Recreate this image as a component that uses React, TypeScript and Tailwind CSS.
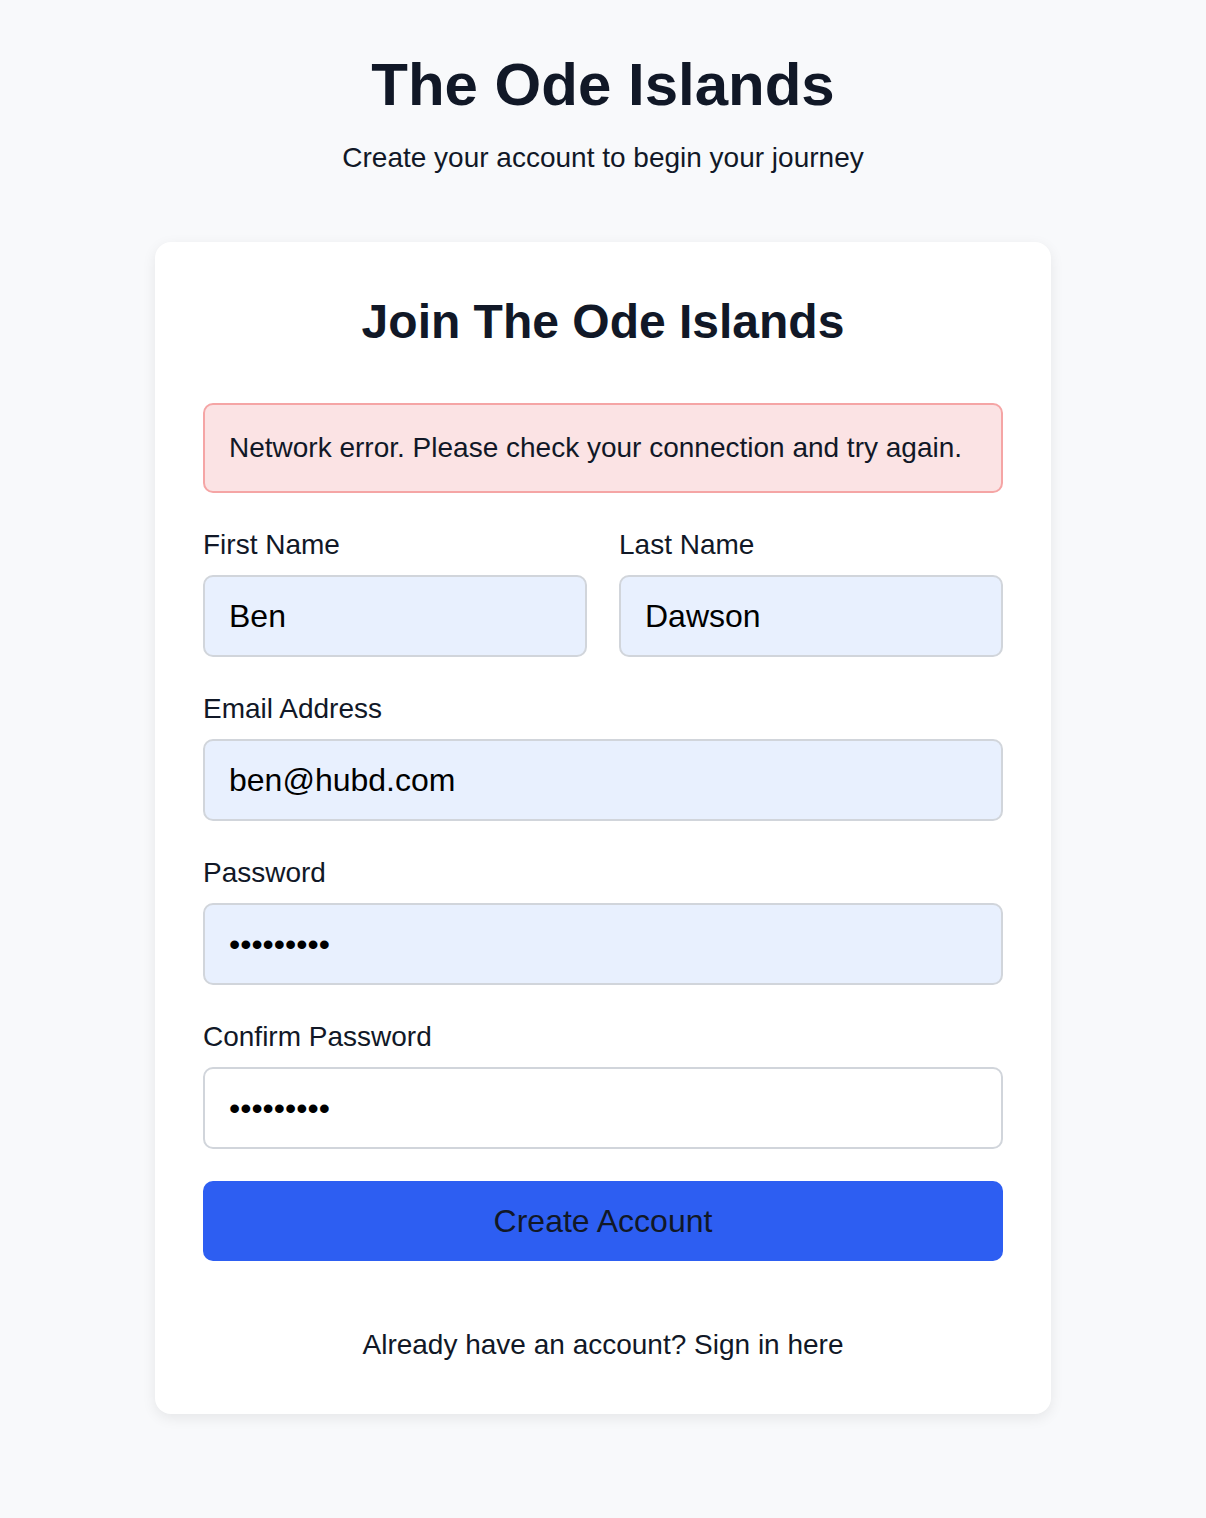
import React from "react";

const font = { fontFamily: '"Liberation Sans", Arial, sans-serif' };

function Field({
  label,
  value,
  type = "text",
  filled = true,
}: {
  label: string;
  value: string;
  type?: string;
  filled?: boolean;
}) {
  return (
    <div className="flex flex-col">
      <label className="text-[28px] leading-[40px] text-[#111827] mb-[10px]">{label}</label>
      <input
        type={type}
        defaultValue={value}
        className={`h-[82px] w-full rounded-[10px] border-2 border-[#d1d5db] px-[24px] text-[32px] text-black outline-none ${
          filled ? "bg-[#e8f0fe]" : "bg-white"
        }`}
        style={font}
      />
    </div>
  );
}

export default function App() {
  return (
    <div className="min-h-[1518px] bg-[#f8f9fb] pt-[49px] text-[#111827]" style={font}>
      <h1 className="text-center text-[60px] leading-[72px] font-bold text-[#111827]">The Ode Islands</h1>
      <p className="mt-[16px] text-center text-[28px] leading-[42px] text-[#111827]">
        Create your account to begin your journey
      </p>
      <div className="mx-auto mt-[63px] w-[896px] rounded-[16px] bg-white px-[48px] pt-[48px] pb-[49px] shadow-[0_4px_14px_rgba(0,0,0,0.08)]">
        <h2 className="pt-[3px] text-center text-[48px] leading-[58px] font-bold text-[#111827] mb-[52px]">
          Join The Ode Islands
        </h2>
        <div className="rounded-[10px] border-2 border-[#f5a5a5] bg-[#fbe3e4] px-[24px] py-[24px] text-[28px] leading-[38px] text-[#111827]">
          Network error. Please check your connection and try again.
        </div>
        <div className="mt-[32px] flex flex-col gap-[32px]">
          <div className="grid grid-cols-2 gap-[32px]">
            <Field label="First Name" value="Ben" />
            <Field label="Last Name" value="Dawson" />
          </div>
          <Field label="Email Address" value="ben@hubd.com" type="email" />
          <Field label="Password" value="password1" type="password" />
          <Field label="Confirm Password" value="password1" type="password" filled={false} />
          <button
            className="h-[80px] w-full rounded-[10px] bg-[#2d5ef2] text-[32px] text-[#111827]"
            style={font}
          >
            Create Account
          </button>
        </div>
        <p className="mt-[64px] text-center text-[28px] leading-[40px] text-[#111827]">
          Already have an account? Sign in here
        </p>
      </div>
    </div>
  );
}
